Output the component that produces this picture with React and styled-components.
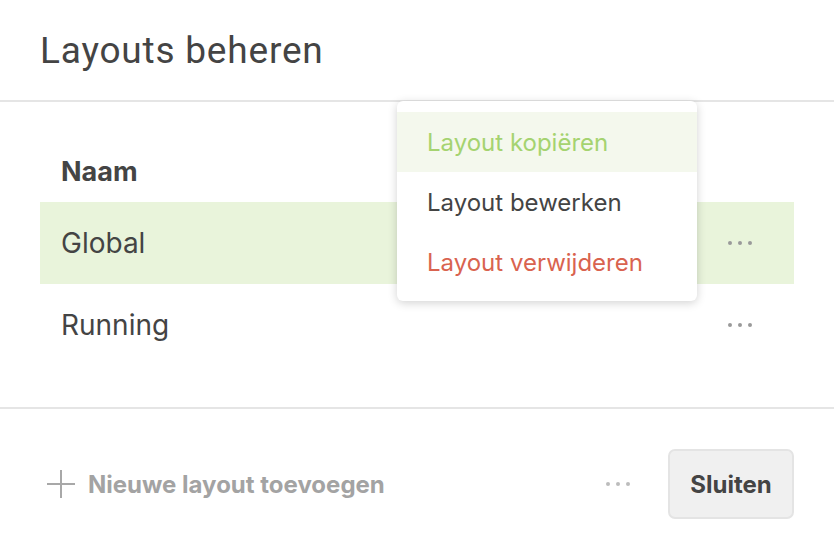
import React from "react";
import styled, { createGlobalStyle } from "styled-components";

const GlobalStyle = createGlobalStyle`
  body {
    margin: 0;
    background: #fff;
    font-family: Inter, "Noto Sans", sans-serif;
    color: #444;
  }
`;

const layouts = [
  { name: "Global", active: true },
  { name: "Running", active: false },
];

const menuItems = [
  { label: "Layout kopiëren", tone: "green", hover: true },
  { label: "Layout bewerken", tone: "default" },
  { label: "Layout verwijderen", tone: "red" },
];

const Dots = ({ color }) => (
  <svg width="28" height="6" viewBox="0 0 28 6">
    <circle cx="4" cy="3" r="2" fill={color} />
    <circle cx="14" cy="3" r="2" fill={color} />
    <circle cx="24" cy="3" r="2" fill={color} />
  </svg>
);

const PlusIcon = () => (
  <svg width="30" height="30" viewBox="0 0 30 30">
    <path d="M15 1v28M1 15h28" stroke="#a8a8a8" strokeWidth="2" fill="none" />
  </svg>
);

const App = () => {
  return (
    <Page>
      <GlobalStyle />
      <Header>
        <Title>Layouts beheren</Title>
      </Header>

      <Body>
        <HeadRow>Naam</HeadRow>
        {layouts.map((l) => (
          <Row key={l.name} active={l.active}>
            <span>{l.name}</span>
            <MoreButton>
              <Dots color="#9a9a9a" />
            </MoreButton>
          </Row>
        ))}
      </Body>

      <Footer>
        <AddButton>
          <PlusIcon />
          Nieuwe layout toevoegen
        </AddButton>
        <FooterActions>
          <MoreButton>
            <Dots color="#bcbcbc" />
          </MoreButton>
          <CloseButton>Sluiten</CloseButton>
        </FooterActions>
      </Footer>

      <Menu>
        {menuItems.map((item) => (
          <MenuItem key={item.label} tone={item.tone} hover={item.hover}>
            {item.label}
          </MenuItem>
        ))}
      </Menu>
    </Page>
  );
};

export default App;

const Page = styled.div`
  position: relative;
  width: 834px;
  height: 559px;
  overflow: hidden;
`;

const Header = styled.div`
  height: 100px;
  display: flex;
  align-items: center;
  padding: 0 40px;
  border-bottom: 2px solid #e5e5e5;
`;

const Title = styled.h1`
  margin: 0;
  font-family: Roboto, "Liberation Sans", sans-serif;
  font-weight: 400;
  font-size: 37px;
  color: #444;
  letter-spacing: 0.8px;
`;

const Body = styled.div`
  padding: 38px 40px 41px;
  border-bottom: 2px solid #e5e5e5;
`;

const HeadRow = styled.div`
  height: 62px;
  display: flex;
  align-items: center;
  padding: 0 21px;
  font-size: 27px;
  font-weight: 700;
  color: #444;
`;

const Row = styled.div`
  height: 82px;
  display: flex;
  align-items: center;
  justify-content: space-between;
  padding: 0 40px 0 21px;
  font-size: 28px;
  color: #444;
  background: ${(p) => (p.active ? "#e9f4db" : "transparent")};
`;

const MoreButton = styled.div`
  display: flex;
  align-items: center;
  cursor: pointer;
`;

const Footer = styled.div`
  height: 150px;
  display: flex;
  align-items: center;
  justify-content: space-between;
  padding: 0 40px 0 46px;
`;

const AddButton = styled.div`
  display: flex;
  align-items: center;
  gap: 12px;
  font-size: 24px;
  font-weight: 700;
  color: #a3a3a3;
  cursor: pointer;
`;

const FooterActions = styled.div`
  display: flex;
  align-items: center;
  gap: 36px;
`;

const CloseButton = styled.button`
  width: 126px;
  height: 70px;
  border: 2px solid #e4e4e4;
  border-radius: 7px;
  background: #f0f0f0;
  font-family: Inter, "Noto Sans", sans-serif;
  font-size: 24px;
  font-weight: 700;
  color: #444;
  cursor: pointer;
`;

const Menu = styled.div`
  position: absolute;
  top: 101px;
  left: 397px;
  width: 300px;
  padding: 11px 0 9px;
  background: #fff;
  border-radius: 6px;
  box-shadow: 0 2px 10px rgba(0, 0, 0, 0.18);
`;

const toneColor = {
  green: "#a5d370",
  red: "#d9634f",
  default: "#444",
};

const MenuItem = styled.div`
  height: 60px;
  display: flex;
  align-items: center;
  padding: 0 30px;
  font-size: 24px;
  color: ${(p) => toneColor[p.tone]};
  background: ${(p) => (p.hover ? "#f4f8ed" : "transparent")};
  cursor: pointer;
`;
